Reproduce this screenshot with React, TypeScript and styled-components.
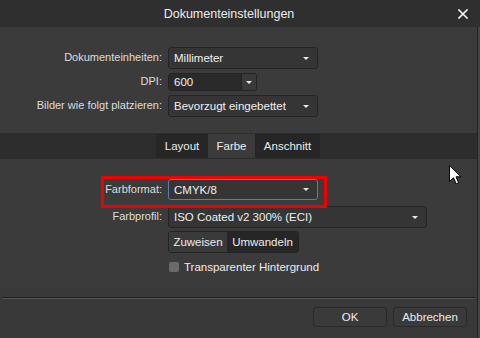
import React from 'react';
import styled, { createGlobalStyle } from 'styled-components';

const Global = createGlobalStyle`
  html, body { margin: 0; padding: 0; background: #3b3b3b; }
  body { font-family: "Liberation Sans", Arial, sans-serif; }
  * { box-sizing: border-box; }
`;

const Window = styled.div`
  position: relative;
  width: 480px;
  height: 338px;
  display: flex;
  flex-direction: column;
  background: #3b3b3b;
  color: #e6e6e6;
  font-size: 11px;
  overflow: hidden;
`;

const TitleBar = styled.div`
  height: 27px;
  flex: none;
  display: flex;
  align-items: center;
  background: #2f2f2f;
`;

const Title = styled.div`
  flex: 1;
  text-align: center;
  font-size: 12.5px;
  color: #ececec;
`;

const Close = styled.svg`
  width: 10px;
  height: 10px;
  margin-right: 12px;
  flex: none;
`;

const Main = styled.div`
  flex: 1;
  display: flex;
  min-height: 0;
`;

const Content = styled.div`
  flex: 1;
  display: flex;
  flex-direction: column;
`;

const Edge = styled.div`
  width: 3px;
  flex: none;
  border-left: 1px solid #242424;
  background: #444;
`;

const FormGrid = styled.div<{ $pt: number; $pb: number; $rows: string }>`
  display: grid;
  grid-template-columns: 162px auto;
  grid-template-rows: ${(p) => p.$rows};
  column-gap: 6px;
  padding: ${(p) => p.$pt}px 0 ${(p) => p.$pb}px;
  align-items: center;
`;

const Label = styled.div`
  justify-self: end;
  color: #dedede;
  white-space: nowrap;
  align-self: center;
  margin-top: -2px;
`;

const Select = styled.div<{ $w: number; $focus?: boolean }>`
  width: ${(p) => p.$w}px;
  height: 100%;
  display: flex;
  align-items: center;
  padding: 0 8px 0 5px;
  background: #353535;
  border: 1px solid ${(p) => (p.$focus ? '#5d7ea6' : '#242424')};
  border-radius: 3px;
  color: #f0f0f0;
  font-size: 11.5px;
  justify-self: start;
`;

const SelectText = styled.span`
  flex: 1;
  white-space: nowrap;
`;

const Arrow = styled.span`
  width: 0;
  height: 0;
  border-left: 3px solid transparent;
  border-right: 3px solid transparent;
  border-top: 3px solid #e8e8e8;
  flex: none;
`;

const Combo = styled.div`
  width: 89px;
  height: 100%;
  display: flex;
  border: 1px solid #242424;
  border-radius: 3px;
  overflow: hidden;
  justify-self: start;
`;

const ComboInput = styled.div`
  flex: 1;
  background: #2a2a2a;
  display: flex;
  align-items: center;
  padding-left: 5px;
  font-size: 11.5px;
  color: #f0f0f0;
  border-right: 1px solid #242424;
`;

const ComboButton = styled.div`
  width: 14px;
  background: #3a3a3a;
  display: flex;
  align-items: center;
  justify-content: center;
`;

const TabBar = styled.div`
  height: 26px;
  flex: none;
  background: #2d2d2d;
  display: flex;
  align-items: center;
  padding-left: 156px;
`;

const Tab = styled.div<{ $w: number; $active?: boolean }>`
  width: ${(p) => p.$w}px;
  height: 24px;
  display: flex;
  align-items: center;
  justify-content: center;
  background: ${(p) => (p.$active ? '#3b3b3b' : '#262626')};
  color: #ececec;
  font-size: 11.5px;
`;

const ColorSection = styled.div`
  position: relative;
`;

const Segmented = styled.div`
  display: flex;
  height: 100%;
  justify-self: start;
  border: 1px solid #242424;
  border-radius: 3px;
  overflow: hidden;
`;

const Segment = styled.div<{ $w: number; $dark?: boolean }>`
  width: ${(p) => p.$w}px;
  display: flex;
  align-items: center;
  justify-content: center;
  background: ${(p) => (p.$dark ? '#262626' : '#3a3a3a')};
  color: #ececec;
  font-size: 11.5px;
`;

const CheckRow = styled.div`
  display: flex;
  align-items: center;
  gap: 5px;
  font-size: 11.5px;
  color: #ececec;
`;

const Checkbox = styled.span`
  width: 10px;
  height: 10px;
  border-radius: 2px;
  background: #6a6a6a;
  flex: none;
  margin-left: 1px;
`;

const Footer = styled.div`
  flex: 1;
  background: #393939;
  display: flex;
  flex-direction: column;
  padding-top: 9px;
`;

const Separator = styled.div`
  height: 2px;
  margin: 0 2px;
  border-top: 1px solid #1f1f1f;
  border-bottom: 1px solid #555;
`;

const ButtonRow = styled.div`
  display: flex;
  justify-content: flex-end;
  gap: 6px;
  padding: 8px 10px 0 0;
`;

const Button = styled.div`
  width: 74px;
  height: 20px;
  display: flex;
  align-items: center;
  justify-content: center;
  background: #3a3a3a;
  border: 1px solid #2a2a2a;
  border-radius: 3px;
  color: #ececec;
  font-size: 11.5px;
`;

const Highlight = styled.div`
  position: absolute;
  left: 101px;
  top: 17px;
  width: 226px;
  height: 32px;
  border: 3px solid #f00000;
  pointer-events: none;
`;

const Cursor = styled.svg`
  position: absolute;
  left: 449px;
  top: 165px;
  width: 13px;
  height: 20px;
`;

const Empty = styled.div``;

export default function App() {
  return (
    <>
      <Global />
      <Window>
        <TitleBar>
          <Title>Dokumenteinstellungen</Title>
          <Close viewBox="0 0 10 10">
            <path d="M1 1 L9 9 M9 1 L1 9" stroke="#f4f4f4" strokeWidth="1.6" strokeLinecap="square" />
          </Close>
        </TitleBar>
        <Main>
          <Content>
            <FormGrid $pt={20} $pb={16} $rows="22px 4px 18px 4px 22px">
              <Label>Dokumenteinheiten:</Label>
              <Select $w={150}>
                <SelectText>Millimeter</SelectText>
                <Arrow />
              </Select>
              <Empty />
              <Empty />
              <Label>DPI:</Label>
              <Combo>
                <ComboInput>600</ComboInput>
                <ComboButton>
                  <Arrow />
                </ComboButton>
              </Combo>
              <Empty />
              <Empty />
              <Label>Bilder wie folgt platzieren:</Label>
              <Select $w={150}>
                <SelectText>Bevorzugt eingebettet</SelectText>
                <Arrow />
              </Select>
            </FormGrid>
            <TabBar>
              <Tab $w={52}>Layout</Tab>
              <Tab $w={47} $active>Farbe</Tab>
              <Tab $w={65}>Anschnitt</Tab>
            </TabBar>
            <ColorSection>
              <FormGrid $pt={20} $pb={13} $rows="21px 6px 22px 3px 22px 6px 16px">
                <Label>Farbformat:</Label>
                <Select $w={150} $focus>
                  <SelectText>CMYK/8</SelectText>
                  <Arrow />
                </Select>
                <Empty />
                <Empty />
                <Label>Farbprofil:</Label>
                <Select $w={259}>
                  <SelectText>ISO Coated v2 300% (ECI)</SelectText>
                  <Arrow />
                </Select>
                <Empty />
                <Empty />
                <Empty />
                <Segmented>
                  <Segment $w={58}>Zuweisen</Segment>
                  <Segment $w={71} $dark>Umwandeln</Segment>
                </Segmented>
                <Empty />
                <Empty />
                <Empty />
                <CheckRow>
                  <Checkbox />
                  Transparenter Hintergrund
                </CheckRow>
              </FormGrid>
              <Highlight />
            </ColorSection>
            <Footer>
              <Separator />
              <ButtonRow>
                <Button>OK</Button>
                <Button>Abbrechen</Button>
              </ButtonRow>
            </Footer>
          </Content>
          <Edge />
        </Main>
        <Cursor viewBox="0 0 13 20">
          <path d="M0.5 0.5 L0.5 16.5 L4.5 12.8 L7.2 18.8 L9.6 17.7 L7 11.8 L12 11.8 Z" fill="#fff" stroke="#000" strokeWidth="1" strokeLinejoin="miter" />
        </Cursor>
      </Window>
    </>
  );
}
